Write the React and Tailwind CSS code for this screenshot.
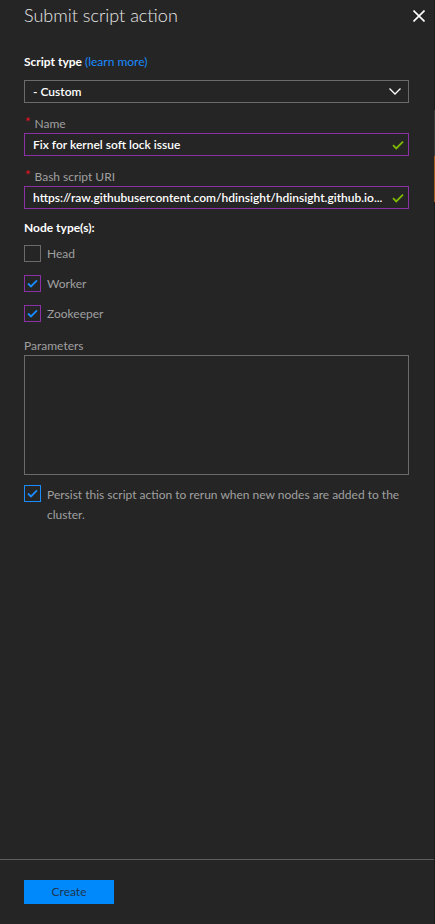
const F = { fontFamily: 'Lato, "Noto Sans", sans-serif' };

function Check({ className }) {
  return (
    <svg viewBox="0 0 12 10" className={className} fill="none">
      <path d="M1 5.2 L4.2 8.4 L11 1.6" stroke="currentColor" strokeWidth="1.8" />
    </svg>
  );
}

function Box({ checked, border }) {
  return (
    <div className={`w-[17px] h-[17px] shrink-0 border flex items-center justify-center ${border}`}>
      {checked && (
        <svg viewBox="0 0 12 10" className="w-[11px] h-[9px] text-[#1a8cff]" fill="none">
          <path d="M1 5 L4.3 8.3 L11 1.4" stroke="currentColor" strokeWidth="2" />
        </svg>
      )}
    </div>
  );
}

function Req({ children }) {
  return (
    <div className="flex items-start leading-4 text-[12px] text-[#a0a0a0]">
      <span className="text-[#e81123] text-[13px] leading-3 mr-[4px] ml-[1px]">*</span>
      <span>{children}</span>
    </div>
  );
}

function Field({ value }) {
  return (
    <div className="mt-[1px] h-[23px] border border-[#8b30a6] flex items-center pl-2 pr-[4px] min-w-0">
      <div className="flex-1 min-w-0 truncate text-[12px] leading-4 text-white font-semibold">{value}</div>
      <Check className="w-[12px] h-[10px] text-[#7fba00] ml-1 shrink-0" />
    </div>
  );
}

function Row({ checked, border, children }) {
  return (
    <div className="flex items-center gap-[6px] h-[17px]">
      <Box checked={checked} border={border} />
      <span className="text-[12px] leading-4 text-[#a0a0a0]">{children}</span>
    </div>
  );
}

export default function App() {
  return (
    <div className="w-[435px] h-[924px] bg-[#252525] flex overflow-hidden" style={F}>
      <div className="flex-1 min-w-0 flex flex-col">
        <div className="flex items-start justify-between pl-6 pr-[9px] pt-[2px]">
          <h1 className="text-[18px] leading-[26px] text-[#e8e8e8] font-light">Submit script action</h1>
          <svg viewBox="0 0 12 12" className="w-[12px] h-[12px] mt-[8px] text-white" fill="none">
            <path d="M0.5 0.5 L11.5 11.5 M11.5 0.5 L0.5 11.5" stroke="currentColor" strokeWidth="1.6" />
          </svg>
        </div>

        <div className="flex flex-col min-w-0 pl-6 pr-[25px]">
          <div className="mt-[26px] leading-4 text-[12px] font-bold text-white">
            Script type <span className="font-normal text-[#1a8cff]">(learn more)</span>
          </div>
          <div className="mt-[10px] h-[23px] border border-[#6b6b6b] flex items-center pl-2 pr-[7px]">
            <span className="flex-1 text-[12px] text-white font-semibold">- Custom</span>
            <svg viewBox="0 0 12 7" className="w-[12px] h-[7px] text-white" fill="none">
              <path d="M0.5 0.5 L6 6 L11.5 0.5" stroke="currentColor" strokeWidth="1.3" />
            </svg>
          </div>

          <div className="mt-[13px]">
            <Req>Name</Req>
          </div>
          <Field value="Fix for kernel soft lock issue" />

          <div className="mt-[13px]">
            <Req>Bash script URI</Req>
          </div>
          <Field value="https://raw.githubusercontent.com/hdinsight/hdinsight.github.io..." />

          <div className="mt-[11px] leading-4 text-[12px] font-bold text-white">Node type(s):</div>

          <div className="mt-[9px] flex flex-col gap-[13px]">
            <Row border="border-[#6b6b6b]">Head</Row>
            <Row checked border="border-[#8b30a6]">Worker</Row>
            <Row checked border="border-[#8b30a6]">Zookeeper</Row>
          </div>

          <div className="mt-[16px] leading-4 text-[12px] text-[#a0a0a0]">Parameters</div>
          <div className="mt-[1px] h-[120px] border border-[#6b6b6b]" />

          <div className="mt-[10px] flex items-start gap-[6px]">
            <Box checked border="border-[#1a8cff]" />
            <p className="text-[12px] leading-5 text-[#a0a0a0] pr-1">
              Persist this script action to rerun when new nodes are added to the cluster.
            </p>
          </div>
        </div>

        <div className="flex-1" />

        <div className="border-t border-[#5e5e5e] px-6 pt-5 pb-5">
          <button className="w-[90px] h-[24px] bg-[#0089fa] text-[12px] text-[#1f3550] flex items-center justify-center">
            Create
          </button>
        </div>
      </div>
      <div className="w-px shrink-0 flex flex-col bg-[#1c1c1c]">
        <div className="h-[110px]" />
        <div className="h-[46px] bg-[#3c3c3c]" />
        <div className="h-[46px] bg-[#a85a1c]" />
      </div>
    </div>
  );
}
